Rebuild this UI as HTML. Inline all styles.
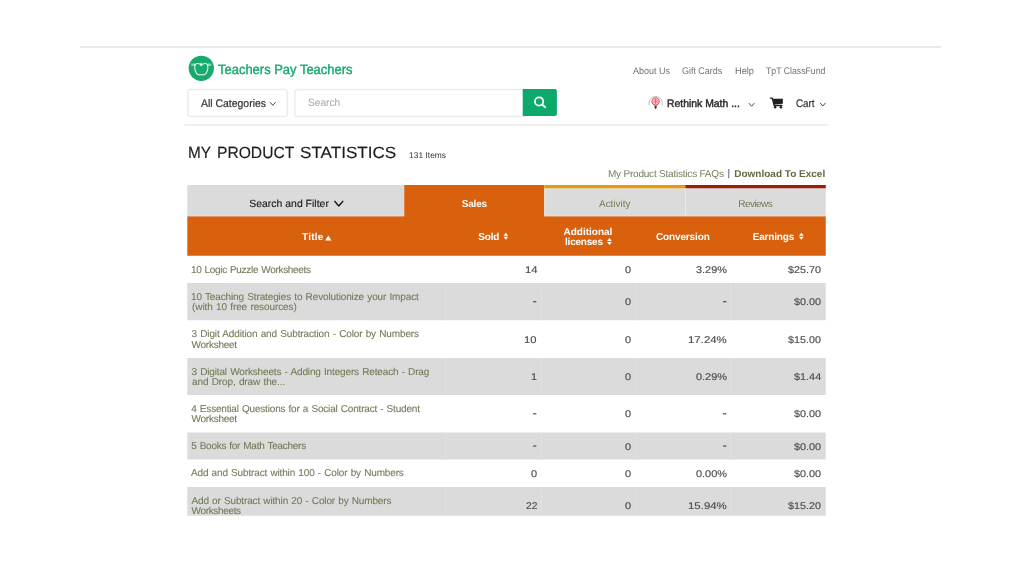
<!DOCTYPE html>
<html><head><meta charset="utf-8"><title>My Product Statistics</title><style>
html,body{margin:0;padding:0;background:#fff;}
body{width:1024px;height:576px;position:relative;overflow:hidden;font-family:"Liberation Sans",sans-serif;}
.b{position:absolute;}
.tx{position:absolute;left:0;top:0;width:1024px;height:576px;filter:blur(0.3px);}
.t{position:absolute;white-space:pre;line-height:1;font-family:"Liberation Sans",sans-serif;text-rendering:geometricPrecision;}
</style></head><body>
<svg class="b" style="left:0;top:0" width="1024" height="576" viewBox="0 0 1024 576">
<rect x="80" y="46.0" width="861.5" height="1.8" fill="#e5e6e9" />
<rect x="184.1" y="124.1" width="644.9" height="1.8" fill="#eeeeee" />
<g transform="translate(188.6 55.6)"><circle cx="12.7" cy="12.7" r="12.65" fill="#18a96d"/>
<g fill="none" stroke="#e4f6ee" stroke-width="1.05" stroke-linecap="round" stroke-linejoin="round">
<path d="M6.4 9.9 L2.7 9.6 M6.3 9.6 L3.2 8.5 M6.4 9.3 L4.8 7.7" stroke-width="0.7" opacity="0.85"/>
<path d="M19.0 9.9 L22.7 9.6 M19.1 9.6 L22.2 8.5 M19.0 9.3 L20.6 7.7" stroke-width="0.7" opacity="0.85"/>
<path d="M6.3 9.2 C7.1 8.3 8.3 7.9 9.3 8.0 C10.8 8.1 11.8 8.9 12.7 9.9 C13.6 8.9 14.6 8.1 16.1 8.0 C17.1 7.9 18.3 8.3 19.1 9.2"/>
<path d="M6.4 9.3 C5.5 13.4 7.0 17.6 9.5 19.0 C10.8 19.6 11.8 19.1 12.7 19.1 C13.6 19.1 14.6 19.6 15.9 19.0 C18.4 17.6 19.9 13.4 19.0 9.3"/>
<path d="M12.5 7.9 L12.7 9.8" stroke-width="1.5"/>
</g></g>
<rect x="187.9" y="89.5" width="99.4" height="26.9" fill="#fff" rx="2.2" stroke="#ececec" stroke-width="1.5"/>
<rect x="294.9" y="89.5" width="232" height="26.9" fill="#fff" rx="2.2" stroke="#ececec" stroke-width="1.5"/>
<path d="M270.4 102.5 L272.84999999999997 105.4 L275.29999999999995 102.5" fill="none" stroke="#484848" stroke-width="1.0" stroke-linecap="round" stroke-linejoin="round"/>
<path d="M522.7 89 L555 89 Q556.9 89 556.9 90.9 L556.9 114.1 Q556.9 116 555 116 L522.7 116 Z" fill="#0da96a"/>
<circle cx="539.1" cy="101.4" r="4.15" fill="none" stroke="#fff" stroke-width="1.75"/>
<path d="M542.2 104.5 L545.2 107.2" stroke="#fff" stroke-width="1.9" stroke-linecap="round"/>
<g transform="translate(647 95)">
<path d="M2.4 10.6 A6.7 6.7 0 1 1 14.9 10.6" fill="none" stroke="#b0b0b0" stroke-width="0.8"/>
<circle cx="8.6" cy="6.4" r="3.6" fill="#fbd3d6" stroke="#e2525c" stroke-width="1.1"/>
<path d="M6.9 5.4 C8 4.5 9.6 4.7 10.3 5.4 M6.7 7.2 C8 6.4 9.4 6.6 10.5 7.2 M8.6 4.4 L8.6 8.6" stroke="#e2525c" stroke-width="0.8" fill="none" stroke-linecap="round"/>
<path d="M7.4 10.6 L9.8 10.6 L9.6 13.0 L8.6 14.2 L7.6 13.0 Z" fill="#444"/>
</g>
<path d="M749.1 103.4 L751.6 106.30000000000001 L754.1 103.4" fill="none" stroke="#484848" stroke-width="1.0" stroke-linecap="round" stroke-linejoin="round"/>
<g transform="translate(769.5 97)">
<path d="M0.9 1.1 L2.7 1.1 L4.7 8.5 L12.3 8.5" fill="none" stroke="#1e1e1e" stroke-width="1.4" stroke-linejoin="round" stroke-linecap="round"/>
<path d="M3.2 1.8 L13.3 1.8 L13.3 6.7 L4.6 7.5 Z" fill="#1e1e1e"/>
<circle cx="5.6" cy="10.3" r="1.25" fill="#1e1e1e"/><circle cx="11.4" cy="10.3" r="1.25" fill="#1e1e1e"/>
</g>
<path d="M820.4 103.2 L822.85 106.0 L825.3 103.2" fill="none" stroke="#484848" stroke-width="1.0" stroke-linecap="round" stroke-linejoin="round"/>
<rect x="728.3" y="169" width="1" height="9.2" fill="#6e5a8a" />
<rect x="187.3" y="185" width="216.95" height="31.4" fill="#dbdbdb" />
<rect x="404.25" y="185" width="140.25" height="33" fill="#d9600c" />
<rect x="544.5" y="185" width="281.25" height="31.4" fill="#dbdbdb" />
<rect x="544.5" y="185" width="140.9" height="3.5" fill="#e89b03" />
<rect x="685.4" y="185" width="140.35" height="3.5" fill="#9c1c08" />
<rect x="545.4" y="188.5" width="280.35" height="1" fill="#dfe3e7" />
<rect x="187.3" y="215.4" width="216.95" height="1" fill="#dee2e6" />
<rect x="544.5" y="215.4" width="281.25" height="1" fill="#dee2e6" />
<rect x="544.5" y="188.3" width="1" height="28.1" fill="#e9e9e9" />
<rect x="685.0" y="188.3" width="1" height="28.1" fill="#e9e9e9" />
<path d="M334.9 201.4 L338.8 205.9 L342.7 201.4" fill="none" stroke="#1c1c1c" stroke-width="1.5" stroke-linecap="round" stroke-linejoin="round"/>
<rect x="187.3" y="216.4" width="638.45" height="39.35" fill="#d9600c" />
<path d="M325.1 240.4 L328.3 235.5 L331.5 240.4 Z" fill="#fff"/>
<path d="M503.5 235.70999999999998 L505.85 232.7 L508.2 235.70999999999998 Z M503.5 236.69 L505.85 239.7 L508.2 236.69 Z" fill="#fff"/>
<path d="M607.1 241.10999999999999 L609.45 238.1 L611.8000000000001 241.10999999999999 Z M607.1 242.09 L609.45 245.1 L611.8000000000001 242.09 Z" fill="#fff"/>
<path d="M799.0 235.70999999999998 L801.35 232.7 L803.7 235.70999999999998 Z M799.0 236.69 L801.35 239.7 L803.7 236.69 Z" fill="#fff"/>
<rect x="187.3" y="283" width="638.45" height="37.25" fill="#dbdbdb" />
<rect x="445.3" y="283" width="1" height="37.25" fill="#e1e1e1" />
<rect x="540.8" y="283" width="1" height="37.25" fill="#e1e1e1" />
<rect x="635.6" y="283" width="1" height="37.25" fill="#e1e1e1" />
<rect x="730.0" y="283" width="1" height="37.25" fill="#e1e1e1" />
<rect x="187.3" y="358" width="638.45" height="37" fill="#dbdbdb" />
<rect x="445.3" y="358" width="1" height="37" fill="#e1e1e1" />
<rect x="540.8" y="358" width="1" height="37" fill="#e1e1e1" />
<rect x="635.6" y="358" width="1" height="37" fill="#e1e1e1" />
<rect x="730.0" y="358" width="1" height="37" fill="#e1e1e1" />
<rect x="187.3" y="432.5" width="638.45" height="27.0" fill="#dbdbdb" />
<rect x="445.3" y="432.5" width="1" height="27.0" fill="#e1e1e1" />
<rect x="540.8" y="432.5" width="1" height="27.0" fill="#e1e1e1" />
<rect x="635.6" y="432.5" width="1" height="27.0" fill="#e1e1e1" />
<rect x="730.0" y="432.5" width="1" height="27.0" fill="#e1e1e1" />
<rect x="187.3" y="487" width="638.45" height="28.75" fill="#dbdbdb" />
<rect x="445.3" y="487" width="1" height="28.75" fill="#e1e1e1" />
<rect x="540.8" y="487" width="1" height="28.75" fill="#e1e1e1" />
<rect x="635.6" y="487" width="1" height="28.75" fill="#e1e1e1" />
<rect x="730.0" y="487" width="1" height="28.75" fill="#e1e1e1" />
<rect x="533.0" y="301.02" width="3.4" height="1.3" fill="#5c5c5c" />
<rect x="723.0" y="301.02" width="3.4" height="1.3" fill="#5c5c5c" />
<rect x="533.0" y="413.15" width="3.4" height="1.3" fill="#5c5c5c" />
<rect x="723.0" y="413.15" width="3.4" height="1.3" fill="#5c5c5c" />
<rect x="533.0" y="445.4" width="3.4" height="1.3" fill="#5c5c5c" />
<rect x="723.0" y="445.4" width="3.4" height="1.3" fill="#5c5c5c" />
</svg>
<div class="tx">
<span class="t" style="left:217.5px;top:63.25px;font-size:13.6px;color:#14a86c;transform:scaleX(0.9539);transform-origin:0 0;-webkit-text-stroke:0.4px #14a86c;">Teachers Pay Teachers</span>
<span class="t" style="left:200.5px;top:99.25px;font-size:11px;color:#333;transform:scaleX(0.9493);transform-origin:0 0;-webkit-text-stroke:0.2px #333;">All Categories</span>
<span class="t" style="left:308.0px;top:98.4px;font-size:10.6px;color:#a6a6a6;transform:scaleX(0.9561);transform-origin:0 0;">Search</span>
<span class="t" style="left:632.75px;top:67.0px;font-size:9.6px;color:#727272;transform:scaleX(0.9377);transform-origin:0 0;">About Us</span>
<span class="t" style="left:682.25px;top:67.0px;font-size:9.6px;color:#727272;transform:scaleX(0.9302);transform-origin:0 0;">Gift Cards</span>
<span class="t" style="left:735.25px;top:67.0px;font-size:9.6px;color:#727272;transform:scaleX(0.9637);transform-origin:0 0;">Help</span>
<span class="t" style="left:766.25px;top:67.0px;font-size:9.6px;color:#727272;transform:scaleX(0.908);transform-origin:0 0;">TpT ClassFund</span>
<span class="t" style="left:666.75px;top:99.4px;font-size:10.8px;color:#2c2c2c;transform:scaleX(0.9634);transform-origin:0 0;-webkit-text-stroke:0.45px #2c2c2c;">Rethink Math ...</span>
<span class="t" style="left:796.0px;top:98.75px;font-size:11px;color:#333;transform:scaleX(0.8939);transform-origin:0 0;-webkit-text-stroke:0.2px #333;">Cart</span>
<span class="t" style="left:187.5px;top:145.0px;font-size:16.2px;color:#1c1c1c;transform:scaleX(0.9465);transform-origin:0 0;-webkit-text-stroke:0.15px #1c1c1c;">MY</span>
<span class="t" style="left:216.75px;top:145.0px;font-size:16.2px;color:#1c1c1c;transform:scaleX(0.9655);transform-origin:0 0;-webkit-text-stroke:0.15px #1c1c1c;">PRODUCT</span>
<span class="t" style="left:299.5px;top:145.0px;font-size:16.2px;color:#1c1c1c;transform:scaleX(1.0556);transform-origin:0 0;-webkit-text-stroke:0.15px #1c1c1c;">STATISTICS</span>
<span class="t" style="left:409.0px;top:151.0px;font-size:8.4px;color:#333;letter-spacing:0.031px;">131 Items</span>
<span class="t" style="left:608.0px;top:169.75px;font-size:10px;color:#707c57;letter-spacing:-0.21px;">My Product Statistics FAQs</span>
<span class="t" style="left:734.25px;top:169.75px;font-size:10px;color:#5f6c42;font-weight:700;">Download To Excel</span>
<span class="t" style="left:249.25px;top:200.0px;font-size:10.4px;color:#1c1c1c;letter-spacing:0.031px;-webkit-text-stroke:0.15px #1c1c1c;">Search and Filter</span>
<span class="t" style="left:461.75px;top:199.75px;font-size:10px;color:#fff;font-weight:700;letter-spacing:-0.188px;">Sales</span>
<span class="t" style="left:599.0px;top:200.0px;font-size:10px;color:#707c57;letter-spacing:-0.036px;">Activity</span>
<span class="t" style="left:738.25px;top:200.0px;font-size:10px;color:#707c57;letter-spacing:-0.542px;">Reviews</span>
<span class="t" style="left:302.0px;top:232.5px;font-size:10px;color:#fff;font-weight:700;letter-spacing:0.25px;">Title</span>
<span class="t" style="left:478.25px;top:232.5px;font-size:10px;color:#fff;font-weight:700;letter-spacing:-0.167px;">Sold</span>
<span class="t" style="left:563.5px;top:227.5px;font-size:10px;color:#fff;font-weight:700;">Additional</span>
<span class="t" style="left:565.0px;top:238.0px;font-size:10px;color:#fff;font-weight:700;letter-spacing:-0.214px;">licenses</span>
<span class="t" style="left:656.0px;top:232.5px;font-size:10px;color:#fff;font-weight:700;letter-spacing:-0.139px;">Conversion</span>
<span class="t" style="left:752.75px;top:232.5px;font-size:10px;color:#fff;font-weight:700;letter-spacing:-0.179px;">Earnings</span>
<span class="t" style="left:191.0px;top:265.75px;font-size:10px;color:#707c57;letter-spacing:-0.31px;word-spacing:0.6px;-webkit-text-stroke:0.1px #707c57;">10 Logic Puzzle Worksheets</span>
<span class="t" style="left:191.0px;top:292.5px;font-size:10px;color:#707c57;letter-spacing:-0.125px;word-spacing:0.6px;-webkit-text-stroke:0.1px #707c57;">10 Teaching Strategies to Revolutionize your Impact</span>
<span class="t" style="left:192.0px;top:303.25px;font-size:10px;color:#707c57;letter-spacing:-0.087px;word-spacing:0.6px;-webkit-text-stroke:0.1px #707c57;">(with 10 free resources)</span>
<span class="t" style="left:191.5px;top:330.0px;font-size:10px;color:#707c57;letter-spacing:-0.125px;word-spacing:0.6px;-webkit-text-stroke:0.1px #707c57;">3 Digit Addition and Subtraction - Color by Numbers</span>
<span class="t" style="left:191.5px;top:340.5px;font-size:10px;color:#707c57;letter-spacing:-0.25px;word-spacing:0.6px;-webkit-text-stroke:0.1px #707c57;">Worksheet</span>
<span class="t" style="left:191.5px;top:367.5px;font-size:10px;color:#707c57;letter-spacing:-0.144px;word-spacing:0.6px;-webkit-text-stroke:0.1px #707c57;">3 Digital Worksheets - Adding Integers Reteach - Drag</span>
<span class="t" style="left:192.0px;top:378.0px;font-size:10px;color:#707c57;letter-spacing:-0.1px;word-spacing:0.6px;-webkit-text-stroke:0.1px #707c57;">and Drop, draw the...</span>
<span class="t" style="left:191.25px;top:404.75px;font-size:10px;color:#707c57;letter-spacing:-0.183px;word-spacing:0.6px;-webkit-text-stroke:0.1px #707c57;">4 Essential Questions for a Social Contract - Student</span>
<span class="t" style="left:191.5px;top:415.25px;font-size:10px;color:#707c57;letter-spacing:-0.25px;word-spacing:0.6px;-webkit-text-stroke:0.1px #707c57;">Worksheet</span>
<span class="t" style="left:191.25px;top:442.0px;font-size:10px;color:#707c57;letter-spacing:-0.26px;word-spacing:0.6px;-webkit-text-stroke:0.1px #707c57;">5 Books for Math Teachers</span>
<span class="t" style="left:191.0px;top:469.25px;font-size:10px;color:#707c57;letter-spacing:-0.144px;word-spacing:0.6px;-webkit-text-stroke:0.1px #707c57;">Add and Subtract within 100 - Color by Numbers</span>
<span class="t" style="left:191.5px;top:496.5px;font-size:10px;color:#707c57;letter-spacing:-0.14px;word-spacing:0.6px;-webkit-text-stroke:0.1px #707c57;">Add or Subtract within 20 - Color by Numbers</span>
<span class="t" style="left:191.5px;top:507.25px;font-size:10px;color:#707c57;letter-spacing:-0.333px;word-spacing:0.6px;-webkit-text-stroke:0.1px #707c57;">Worksheets</span>
<span class="t" style="left:524.5px;top:265.98px;font-size:9.8px;color:#4c4c4c;transform:scaleX(1.1522);transform-origin:0 0;-webkit-text-stroke:0.15px #4c4c4c;">14</span>
<span class="t" style="left:624.75px;top:265.98px;font-size:9.8px;color:#4c4c4c;transform:scaleX(1.12);transform-origin:0 0;-webkit-text-stroke:0.15px #4c4c4c;">0</span>
<span class="t" style="left:695.5px;top:265.98px;font-size:9.8px;color:#4c4c4c;transform:scaleX(1.1146);transform-origin:0 0;-webkit-text-stroke:0.15px #4c4c4c;">3.29%</span>
<span class="t" style="left:787.75px;top:265.98px;font-size:9.8px;color:#4c4c4c;transform:scaleX(1.097);transform-origin:0 0;-webkit-text-stroke:0.15px #4c4c4c;">$25.70</span>
<span class="t" style="left:624.75px;top:298.23px;font-size:9.8px;color:#4c4c4c;transform:scaleX(1.12);transform-origin:0 0;-webkit-text-stroke:0.15px #4c4c4c;">0</span>
<span class="t" style="left:793.75px;top:298.23px;font-size:9.8px;color:#4c4c4c;transform:scaleX(1.1042);transform-origin:0 0;-webkit-text-stroke:0.15px #4c4c4c;">$0.00</span>
<span class="t" style="left:523.5px;top:335.73px;font-size:9.8px;color:#4c4c4c;transform:scaleX(1.1427);transform-origin:0 0;-webkit-text-stroke:0.15px #4c4c4c;">10</span>
<span class="t" style="left:624.75px;top:335.73px;font-size:9.8px;color:#4c4c4c;transform:scaleX(1.12);transform-origin:0 0;-webkit-text-stroke:0.15px #4c4c4c;">0</span>
<span class="t" style="left:687.5px;top:335.73px;font-size:9.8px;color:#4c4c4c;transform:scaleX(1.1673);transform-origin:0 0;-webkit-text-stroke:0.15px #4c4c4c;">17.24%</span>
<span class="t" style="left:787.75px;top:335.73px;font-size:9.8px;color:#4c4c4c;transform:scaleX(1.097);transform-origin:0 0;-webkit-text-stroke:0.15px #4c4c4c;">$15.00</span>
<span class="t" style="left:530.5px;top:373.1px;font-size:9.8px;color:#4c4c4c;transform:scaleX(1.12);transform-origin:0 0;-webkit-text-stroke:0.15px #4c4c4c;">1</span>
<span class="t" style="left:624.75px;top:373.1px;font-size:9.8px;color:#4c4c4c;transform:scaleX(1.12);transform-origin:0 0;-webkit-text-stroke:0.15px #4c4c4c;">0</span>
<span class="t" style="left:695.5px;top:373.1px;font-size:9.8px;color:#4c4c4c;transform:scaleX(1.1146);transform-origin:0 0;-webkit-text-stroke:0.15px #4c4c4c;">0.29%</span>
<span class="t" style="left:793.75px;top:373.1px;font-size:9.8px;color:#4c4c4c;transform:scaleX(1.1091);transform-origin:0 0;-webkit-text-stroke:0.15px #4c4c4c;">$1.44</span>
<span class="t" style="left:624.75px;top:410.35px;font-size:9.8px;color:#4c4c4c;transform:scaleX(1.12);transform-origin:0 0;-webkit-text-stroke:0.15px #4c4c4c;">0</span>
<span class="t" style="left:793.75px;top:410.35px;font-size:9.8px;color:#4c4c4c;transform:scaleX(1.1042);transform-origin:0 0;-webkit-text-stroke:0.15px #4c4c4c;">$0.00</span>
<span class="t" style="left:624.75px;top:442.6px;font-size:9.8px;color:#4c4c4c;transform:scaleX(1.12);transform-origin:0 0;-webkit-text-stroke:0.15px #4c4c4c;">0</span>
<span class="t" style="left:793.75px;top:442.6px;font-size:9.8px;color:#4c4c4c;transform:scaleX(1.1042);transform-origin:0 0;-webkit-text-stroke:0.15px #4c4c4c;">$0.00</span>
<span class="t" style="left:530.5px;top:469.85px;font-size:9.8px;color:#4c4c4c;transform:scaleX(1.12);transform-origin:0 0;-webkit-text-stroke:0.15px #4c4c4c;">0</span>
<span class="t" style="left:624.75px;top:469.85px;font-size:9.8px;color:#4c4c4c;transform:scaleX(1.12);transform-origin:0 0;-webkit-text-stroke:0.15px #4c4c4c;">0</span>
<span class="t" style="left:695.5px;top:469.85px;font-size:9.8px;color:#4c4c4c;transform:scaleX(1.1146);transform-origin:0 0;-webkit-text-stroke:0.15px #4c4c4c;">0.00%</span>
<span class="t" style="left:793.75px;top:469.85px;font-size:9.8px;color:#4c4c4c;transform:scaleX(1.1042);transform-origin:0 0;-webkit-text-stroke:0.15px #4c4c4c;">$0.00</span>
<span class="t" style="left:525.5px;top:502.35px;font-size:9.8px;color:#4c4c4c;transform:scaleX(1.0474);transform-origin:0 0;-webkit-text-stroke:0.15px #4c4c4c;">22</span>
<span class="t" style="left:624.75px;top:502.35px;font-size:9.8px;color:#4c4c4c;transform:scaleX(1.12);transform-origin:0 0;-webkit-text-stroke:0.15px #4c4c4c;">0</span>
<span class="t" style="left:687.5px;top:502.35px;font-size:9.8px;color:#4c4c4c;transform:scaleX(1.1673);transform-origin:0 0;-webkit-text-stroke:0.15px #4c4c4c;">15.94%</span>
<span class="t" style="left:787.75px;top:502.35px;font-size:9.8px;color:#4c4c4c;transform:scaleX(1.097);transform-origin:0 0;-webkit-text-stroke:0.15px #4c4c4c;">$15.20</span>
</div>
<div class="b" style="left:0;top:516px;width:1024px;height:60px;background:#fff"></div>
</body></html>
